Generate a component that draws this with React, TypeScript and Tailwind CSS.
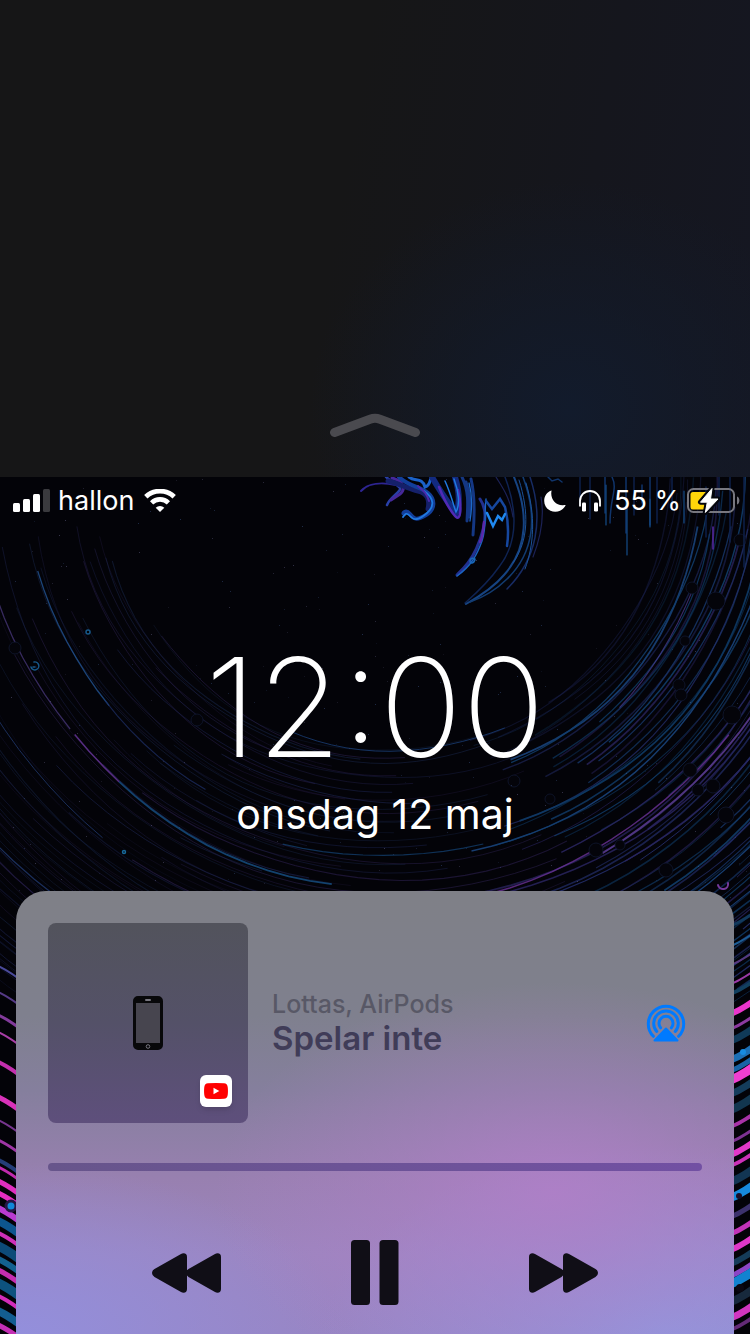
import React from "react";

type Stroke = { d: string; color: string; width: number; opacity: number };
type Streak = { y: number; color: string; width: number };

/* Small deterministic generator, so the wallpaper is the same on every render. */
function makeRandom(seed: number) {
  let s = seed;
  return () => {
    s = (s * 1664525 + 1013904223) % 4294967296;
    return s / 4294967296;
  };
}

const CX = 390;
const CY = -7;

function arcPath(r: number, from: number, to: number, phase: number) {
  const points: string[] = [];
  for (let a = from; a <= to; a += 3) {
    const rad = (a * Math.PI) / 180;
    const rr = r + Math.sin(a / 9 + phase) * 1.6 + Math.sin(a / 23 + phase * 2) * 3;
    points.push(`${(CX + rr * Math.cos(rad)).toFixed(1)} ${(CY + rr * Math.sin(rad)).toFixed(1)}`);
  }
  return "M" + points.join("L");
}

function buildRings(): Stroke[] {
  const rnd = makeRandom(77);
  const rings: Stroke[] = [];
  const rightColors = ["#12406f", "#1a4680", "#17366a", "#25306e", "#0f3a66", "#2a2560"];
  const leftColors = ["#1c2450", "#22204a", "#1a2a50", "#2a1f4c"];
  for (let r = 280; r < 640; r += 4.2) {
    const start = rnd() * 14 - 2;
    rings.push({
      d: arcPath(r, start, 48 + rnd() * 34, rnd() * 6),
      color: rightColors[Math.floor(rnd() * rightColors.length)],
      width: 0.7 + rnd() * 1.1,
      opacity: r < 310 ? 0.3 : 0.45 + rnd() * 0.45,
    });
    rings.push({
      d: arcPath(r + 2, 62 + rnd() * 50, 118 + rnd() * 55, rnd() * 6),
      color: leftColors[Math.floor(rnd() * leftColors.length)],
      width: 0.5 + rnd() * 0.6,
      opacity: 0.3 + rnd() * 0.35,
    });
  }
  return rings;
}

function buildStars() {
  const rnd = makeRandom(9);
  return Array.from({ length: 240 }, () => ({
    x: Math.round(rnd() * 750),
    y: Math.round(rnd() * 440),
    o: 0.1 + rnd() * 0.3,
    c: rnd() > 0.5 ? "#8a86b8" : "#4f6fae",
  }));
}

const rings = buildRings();
const stars = buildStars();

const accents: Stroke[] = [
  { d: arcPath(365, 140, 166, 1), color: "#245a9e", width: 1.3, opacity: 0.75 },
  { d: arcPath(365, 120, 141, 1), color: "#1e2f66", width: 1.1, opacity: 0.75 },
  { d: arcPath(415, 98, 132, 2), color: "#1a5890", width: 1.8, opacity: 0.75 },
  { d: arcPath(415, 131, 142, 2), color: "#6b37a0", width: 1.5, opacity: 0.8 },
  { d: arcPath(415, 141, 162, 2), color: "#4a387c", width: 1.3, opacity: 0.75 },
  { d: arcPath(468, 128, 150, 2), color: "#2a4a90", width: 1, opacity: 0.6 },
  { d: arcPath(540, 122, 160, 4), color: "#2c4c95", width: 1.2, opacity: 0.6 },
  { d: arcPath(282, 66, 112, 3), color: "#1c4685", width: 1, opacity: 0.7 },
  { d: arcPath(388, 76, 108, 1), color: "#17508a", width: 1.2, opacity: 0.6 },
  { d: arcPath(432, 38, 100, 5), color: "#7136a0", width: 1.5, opacity: 0.75 },
  { d: arcPath(439, 34, 62, 5), color: "#63419f", width: 2, opacity: 0.8 },
  { d: arcPath(330, 22, 46, 2), color: "#4f3a90", width: 1.1, opacity: 0.7 },
];

const bubbles = [
  [692, 111, 6], [716, 124, 9], [740, 63, 6], [685, 164, 5], [679, 208, 6], [681, 218, 6],
  [732, 238, 9], [690, 293, 7], [698, 313, 6], [713, 309, 7], [514, 304, 6], [726, 338, 8],
  [596, 373, 7], [620, 368, 5], [550, 322, 5], [197, 243, 6], [15, 171, 6], [666, 393, 7],
];

const leftStreaks: Streak[] = [
  { y: 496, color: "#4a4a9a", width: 2 }, { y: 522, color: "#553a86", width: 2 },
  { y: 545, color: "#823b9b", width: 3 }, { y: 562, color: "#a83ea6", width: 2 },
  { y: 592, color: "#c32fae", width: 4 }, { y: 627, color: "#d832b9", width: 5 },
  { y: 650, color: "#77368e", width: 2 }, { y: 670, color: "#9f36a5", width: 3 },
  { y: 690, color: "#243e78", width: 4 }, { y: 697, color: "#c12aae", width: 3 },
  { y: 711, color: "#e02fc0", width: 5 }, { y: 723, color: "#e52ec0", width: 5 },
  { y: 738, color: "#b93bd0", width: 6 }, { y: 751, color: "#0d568e", width: 8 },
  { y: 763, color: "#ce2fb8", width: 4 }, { y: 776, color: "#0d4b78", width: 9 },
  { y: 789, color: "#12618f", width: 6 }, { y: 800, color: "#c52db0", width: 5 },
  { y: 813, color: "#0d527f", width: 9 }, { y: 826, color: "#d32cba", width: 4 },
  { y: 841, color: "#135d90", width: 8 }, { y: 855, color: "#c42fb4", width: 5 },
];

const rightStreaks: Streak[] = [
  { y: 446, color: "#12395c", width: 3 }, { y: 466, color: "#1c5c94", width: 2 },
  { y: 485, color: "#57397f", width: 2 }, { y: 504, color: "#9b3aa6", width: 2 },
  { y: 514, color: "#12405f", width: 4 }, { y: 534, color: "#ea35cc", width: 6 },
  { y: 549, color: "#8c3aa0", width: 3 }, { y: 561, color: "#103a58", width: 7 },
  { y: 580, color: "#1c6fb5", width: 7 }, { y: 591, color: "#1763a6", width: 5 },
  { y: 600, color: "#f03fd1", width: 9 }, { y: 614, color: "#143d5c", width: 7 },
  { y: 630, color: "#12364f", width: 8 }, { y: 647, color: "#a832a8", width: 4 },
  { y: 662, color: "#7d3293", width: 3 }, { y: 675, color: "#e238c8", width: 6 },
  { y: 686, color: "#cc30b8", width: 4 }, { y: 702, color: "#123553", width: 8 },
  { y: 718, color: "#1689dc", width: 8 }, { y: 737, color: "#3c326d", width: 5 },
  { y: 754, color: "#c233b8", width: 5 }, { y: 770, color: "#df37c8", width: 6 },
  { y: 784, color: "#153c59", width: 6 }, { y: 796, color: "#8b45c5", width: 5 },
  { y: 804, color: "#1283d0", width: 9 }, { y: 822, color: "#17293c", width: 8 },
  { y: 838, color: "#d235c0", width: 7 }, { y: 850, color: "#632b77", width: 4 },
];

function Wallpaper() {
  return (
    <svg
      className="absolute inset-0 h-full w-full"
      viewBox="0 0 750 857"
      preserveAspectRatio="xMidYMin slice"
      aria-hidden="true"
    >
      <rect width="750" height="857" fill="#030308" />
      <g fill="none">
        {rings.map((s, i) => (
          <path key={i} d={s.d} stroke={s.color} strokeWidth={s.width} opacity={s.opacity} />
        ))}
        {accents.map((s, i) => (
          <path key={i} d={s.d} stroke={s.color} strokeWidth={s.width} opacity={s.opacity} />
        ))}
      </g>
      {bubbles.map(([x, y, r]) => (
        <circle key={`${x}-${y}`} cx={x} cy={y} r={r} fill="#04040a" stroke="#101830" strokeWidth="0.8" />
      ))}
      {stars.map((s, i) => (
        <rect key={i} x={s.x} y={s.y} width="1" height="1" fill={s.c} opacity={s.o} />
      ))}
      <g fill="none" strokeLinecap="round">
        <path d="M31 190a4 4 0 1 0 3-5M33 190h2" stroke="#17588a" strokeWidth="1.5" />
        <circle cx="88" cy="155" r="2" stroke="#17588a" strokeWidth="1.5" />
        <circle cx="124" cy="375" r="1.500" stroke="#17689a" strokeWidth="1.5" />
        <path d="M718 408a5 5 0 1 0 10-2" stroke="#763b9c" strokeWidth="2" />

        <path d="M361 14C368 6 382 5 396 8" stroke="#2e2592" strokeWidth="2" />
        <path d="M386 0c6 5 12 8 14 11s-10 9-13 17" stroke="#2940a8" strokeWidth="2.500" />
        <path d="M392 1c12 3 14 11 8 16l-9 6" stroke="#46289a" strokeWidth="3" />
        <path d="M388 4c10 2 20 8 30 10s12 10 10 18" stroke="#15206a" strokeWidth="5" />
        <path d="M399 0c9 9 22 10 29 16s8 16-2 22-12 4-16-1-8-1-6 0" stroke="#123e9a" strokeWidth="4" />
        <path d="M424 14c10 7 11 15 3 22s-13 8-17 3-6 0-7 1" stroke="#2079df" strokeWidth="1.800" />
        <path d="M409 0c6 5 13 0 16 10 6-2 4-7 7-10" stroke="#1b62c9" strokeWidth="3" />
        <path d="M418 9c6 5 9 8 11 15" stroke="#4b2aab" strokeWidth="2" />
        <path d="M432 0c10 18 18 28 24 36 5-11 3-23-1-36" stroke="#122a80" strokeWidth="6" />
        <path d="M439 10c4 10 10 22 16 29s7-9 3-26" stroke="#512ab5" strokeWidth="2.500" />
        <path d="M445 4c6 13 8 23 11 31 4-7 3-20-2-33" stroke="#2079df" strokeWidth="1.500" />
        <path d="M462 0c7 14 6 27 5 44M471 2c4 16 4 32 2 56M466 5c5 13 4 25 3 35" stroke="#143784" strokeWidth="3" />
        <path d="M469 6c4 14 3 26 1 38" stroke="#1d69c7" strokeWidth="1.300" />
        <path d="M480 22c5 7 7 16 3 31s-8 24-15 33-9 9-11 12" stroke="#22308f" strokeWidth="3" />
        <path d="M486 22c-2 15 1 28-4 42s-11 25-25 35" stroke="#1a64c2" strokeWidth="1.400" />
        <path d="M484 45c-1 8-1 15-4 20" stroke="#5a28aa" strokeWidth="2.500" />
        <path d="M486 24l6 8 8-10 5 8c3 12 4 25 2 39" stroke="#16479e" strokeWidth="2.500" />
        <path d="M487 36l6 13 5-10 4 4 3-6" stroke="#2089f0" strokeWidth="2.500" />
        <path d="M475 82c-1 5-5 5-5 2s4-4 5-1" stroke="#1a68b8" strokeWidth="1.500" />
        <path d="M505 0c10 26 16 62-6 90-12 17-25 28-34 36" stroke="#0f2352" strokeWidth="1.500" />
        <path d="M514 0c14 34 15 70-10 98-10 12-22 20-38 29" stroke="#164381" strokeWidth="2" />
        <path d="M523 0c15 40 11 76-16 102-10 10-20 17-37 23" stroke="#123b70" strokeWidth="1.600" />
        <path d="M530 0c14 42 7 82-23 112" stroke="#172b63" strokeWidth="1.500" />
        <path d="M519 3c10 32 10 60-6 83M526 6c10 33 8 62-1 86" stroke="#1b5298" strokeWidth="1" />
        <path d="M496 0c6 10 14 20 17 40M541 20c4 22-1 42-8 60" stroke="#1c2256" strokeWidth="1.200" />
      </g>
      <g fill="none" strokeLinecap="round" strokeWidth="1.500">
        <path d="M548 0l4 4 6-2 4 3M605 0v36M612 0c6 12-2 20-2 46M626 0v56M642 8v18M650 0v48" stroke="#10346a" />
        <path d="M580 0v28M590 0v42M634 0v38M657 0v46M672 0v32M706 10v50M719 0v38M730 0v65M744 0v90" stroke="#0e214a" />
        <path d="M606 8v40M627 22v56M650 22v28M684 14v32" stroke="#144c88" strokeWidth="1.200" />
        <path d="M713 50v22" stroke="#572aa6" />
      </g>
      <g fill="none">
        {leftStreaks.map((s) => (
          <path key={s.y} d={`M-4 ${s.y - 8}Q8 ${s.y - 3} 26 ${s.y + 11}`} stroke={s.color} strokeWidth={s.width} />
        ))}
        {rightStreaks.map((s) => (
          <path key={s.y} d={`M726 ${s.y + 5}Q742 ${s.y - 1} 756 ${s.y - 12}`} stroke={s.color} strokeWidth={s.width} />
        ))}
        <circle cx="11" cy="729" r="5" fill="#1188d8" stroke="#251746" strokeWidth="3" />
        <circle cx="739" cy="719" r="3" fill="#180a24" />
        <circle cx="740" cy="811" r="4" fill="#0a0812" />
        <circle cx="743" cy="575" r="3" fill="#178be0" />
      </g>
    </svg>
  );
}

function SignalIcon() {
  return (
    <svg className="h-6 w-[37px]" viewBox="0 0 37 24" fill="#fff" role="img" aria-label="Signal">
      <rect x="0" y="14" width="7" height="9" rx="1.500" />
      <rect x="10" y="10" width="7" height="13" rx="1.500" />
      <rect x="20" y="5" width="7" height="18" rx="1.500" />
      <rect x="30" y="0" width="7" height="23" rx="1.500" opacity="0.22" />
    </svg>
  );
}

function WifiIcon() {
  return (
    <svg className="h-6 w-8" viewBox="0 0 32 24" fill="none" stroke="#fff" role="img" aria-label="Wi-Fi">
      <path d="M1.800 7.800a20.500 20.500 0 0 1 28.400 0" strokeWidth="4.800" />
      <path d="M7.600 13.800a12 12 0 0 1 16.800 0" strokeWidth="4.600" />
      <path d="M16 23.100l-4.300-4.400a6.200 6.200 0 0 1 8.600 0z" fill="#fff" stroke="none" />
    </svg>
  );
}

function MoonIcon() {
  return (
    <svg className="h-[22px] w-[22px]" viewBox="0 0 22 22" role="img" aria-label="Do not disturb">
      <path
        d="M7.600.6C5.800 7.800 11.200 15.600 19 15.200c1.200-.1 2-.2 2.700-.2C20 19 16 21.700 11.300 21.700 5 21.700.2 17 .2 10.900.2 6 3.200 1.900 7.600.6z"
        fill="#fff"
      />
    </svg>
  );
}

function HeadphonesIcon() {
  return (
    <svg className="h-[22px] w-6" viewBox="0 0 24 22" role="img" aria-label="Headphones">
      <path d="M2 16.500V11a10 10 0 0 1 20 0v5.500" fill="none" stroke="#fff" strokeWidth="1.800" />
      <rect x="4" y="12.500" width="4" height="9" rx="1.200" fill="#fff" />
      <rect x="16" y="12.500" width="4" height="9" rx="1.200" fill="#fff" />
    </svg>
  );
}

function BatteryIcon() {
  return (
    <svg className="h-7 w-[53px]" viewBox="0 0 53 28" role="img" aria-label="Battery charging">
      <rect x="1" y="2" width="46" height="23" rx="5.500" fill="none" stroke="#77777f" strokeWidth="2" />
      <path d="M50 9.500c3.200.8 3.200 7.200 0 8z" fill="#77777f" />
      <path d="M6 5h15l-4 17.500H6A2.500 2.500 0 0 1 3.500 20V7.500A2.500 2.500 0 0 1 6 5z" fill="#ffd60a" />
      <path
        d="M25 1.500L13.500 15.200h6.800L18.300 25.500 31 12h-7.500z"
        fill="#05060d"
        stroke="#05060d"
        strokeWidth="5"
        strokeLinejoin="round"
      />
      <path d="M25 1.500L13.500 15.200h6.800L18.300 25.500 31 12h-7.500z" fill="#fff" stroke="#fff" strokeLinejoin="round" />
    </svg>
  );
}

function StatusBar() {
  return (
    <header className="flex h-12 items-center justify-between pr-[10px] pl-[13px] text-[27px] leading-8">
      <div className="flex items-center gap-[10px]">
        <div className="flex items-center gap-2">
          <SignalIcon />
          <span>hallon</span>
        </div>
        <WifiIcon />
      </div>
      <div className="flex items-center gap-3">
        <MoonIcon />
        <HeadphonesIcon />
        <div className="flex items-center gap-[6px]">
          <span>55 %</span>
          <BatteryIcon />
        </div>
      </div>
    </header>
  );
}

function Artwork() {
  return (
    <div className="relative flex size-[200px] shrink-0 items-center justify-center rounded-lg bg-linear-to-b from-[#52535c] via-[#545168] to-[#5e4f7c]">
      <svg className="h-[54px] w-[30px]" viewBox="0 0 30 54" aria-hidden="true">
        <path
          fillRule="evenodd"
          d="M5 0h20a5 5 0 0 1 5 5v44a5 5 0 0 1-5 5H5a5 5 0 0 1-5-5V5a5 5 0 0 1 5-5zM3 7v40h24V7z"
          fill="#08080a"
        />
        <rect x="12" y="3" width="6" height="2" rx="1" fill="#77767f" />
        <circle cx="15" cy="50.500" r="1.800" fill="none" stroke="#77767f" />
        <rect x="3" y="7" width="24" height="40" fill="#47454f" />
      </svg>
      <div className="absolute right-4 bottom-4 flex size-8 items-center justify-center rounded-md bg-white shadow-md">
        <svg className="h-4 w-6" viewBox="0 0 24 16" role="img" aria-label="YouTube">
          <path
            d="M4 .3Q12-.3 20 .3 23.300.5 23.700 4q.5 4 0 8-.4 3.500-3.700 3.700-8 .6-16 0Q.7 15.500.3 12q-.5-4 0-8Q.7.500 4 .300z"
            fill="#f00"
          />
          <path d="M9.500 4.800v6.400L15.300 8z" fill="#fff" />
        </svg>
      </div>
    </div>
  );
}

function AirPlayIcon() {
  return (
    <svg className="h-[38px] w-10" viewBox="0 0 40 38" fill="none" stroke="#007aff" strokeWidth="3" aria-hidden="true">
      <path d="M7.400 32.300a17.700 17.700 0 1 1 25.200 0" strokeLinecap="round" />
      <path d="M10.800 27.500a12.300 12.300 0 1 1 18.400 0" strokeLinecap="round" />
      <path d="M14.600 23.800a7 7 0 1 1 10.800 0" strokeLinecap="round" />
      <path d="M20 24.500L31.500 36.500h-23z" fill="#007aff" strokeWidth="2" strokeLinejoin="round" />
    </svg>
  );
}

function SkipIcon({ back = false }: { back?: boolean }) {
  return (
    <svg
      className={back ? "h-10 w-[69px] rotate-180" : "h-10 w-[69px]"}
      viewBox="0 0 69 40"
      fill="#100e16"
      aria-hidden="true"
    >
      <path d="M0 4Q0 .3 3.500.3q1.300 0 2.500.8L32.500 16q2.500 1.500 2.500 4t-2.500 4L6 38.900q-1.200.8-2.500.8Q0 39.700 0 36z" />
      <path d="M34 4q0-3.700 3.500-3.700 1.300 0 2.500.8L66.500 16q2.500 1.500 2.500 4t-2.500 4L40 38.900q-1.200.8-2.500.8-3.500 0-3.500-3.700z" />
    </svg>
  );
}

function Player() {
  return (
    <section
      aria-label="Media player"
      className="mx-4 mt-[53px] flex-1 rounded-t-[30px] bg-[radial-gradient(ellipse_340px_210px_at_75%_68%,#b07fc8e0_0%,#b07fc870_45%,#b07fc800_100%),radial-gradient(ellipse_330px_170px_at_0%_100%,#938fdc_0%,#938fdc00_100%),radial-gradient(ellipse_340px_190px_at_90%_100%,#9097de_0%,#9097de00_100%),linear-gradient(180deg,#7f8087_0%,#7f808e_28%,#857f9d_45%,#9880b0_65%,#9c85bf_82%,#9885c3_100%)] p-8 pb-[29px]"
    >
      <div className="flex items-center gap-6">
        <Artwork />
        <div className="flex-1 pb-1">
          <p className="text-[25px] leading-[34px] font-medium text-[#585866]">Lottas, AirPods</p>
          <h2 className="text-[33px] leading-[34px] font-semibold text-[#403c58]">Spelar inte</h2>
        </div>
        <button type="button" aria-label="AirPlay" className="mr-4">
          <AirPlayIcon />
        </button>
      </div>
      <input
        type="range"
        aria-label="Playback position"
        min={0}
        max={100}
        defaultValue={0}
        className="mt-10 block h-2 w-full appearance-none rounded-full bg-linear-to-r from-[#67558b] to-[#7250a3] [&::-webkit-slider-thumb]:size-0 [&::-webkit-slider-thumb]:appearance-none"
      />
      <div className="mt-[69px] flex items-center justify-between px-[104px]">
        <button type="button" aria-label="Previous">
          <SkipIcon back />
        </button>
        <button type="button" aria-label="Pause">
          <svg className="h-[65px] w-12" viewBox="0 0 48 65" fill="#100e16" aria-hidden="true">
            <rect x="0" y="0" width="19" height="65" rx="3.500" />
            <rect x="28.500" y="0" width="19" height="65" rx="3.500" />
          </svg>
        </button>
        <button type="button" aria-label="Next">
          <SkipIcon />
        </button>
      </div>
    </section>
  );
}

export default function App() {
  return (
    <div className="flex min-h-screen flex-col bg-[#030308] font-['Inter','Liberation_Sans',sans-serif] text-white">
      <div className="flex min-h-[477px] items-end justify-center bg-[radial-gradient(ellipse_260px_230px_at_76%_86%,#121b2c_0%,#121b2c00_100%),linear-gradient(100deg,#161617_0%,#161617_45%,#15161d_75%,#151722_100%)] pb-10">
        <button type="button" aria-label="Close">
          <svg className="h-6 w-[90px]" viewBox="0 0 90 24" fill="none" aria-hidden="true">
            <path
              d="M4.500 19.500L40 6.200q5-1.800 10 0l35.500 13.300"
              stroke="#4a4a4f"
              strokeWidth="9"
              strokeLinecap="round"
              strokeLinejoin="round"
            />
          </svg>
        </button>
      </div>
      <main className="relative flex flex-1 flex-col overflow-hidden">
        <Wallpaper />
        <div className="relative flex flex-1 flex-col">
          <StatusBar />
          <time dateTime="12:00" className="mt-[114px] text-center text-[137px] leading-[137px] font-extralight">
            12:00
          </time>
          <p className="mt-[14px] text-center text-[41px] leading-[48px]">onsdag 12 maj</p>
          <Player />
        </div>
      </main>
    </div>
  );
}
